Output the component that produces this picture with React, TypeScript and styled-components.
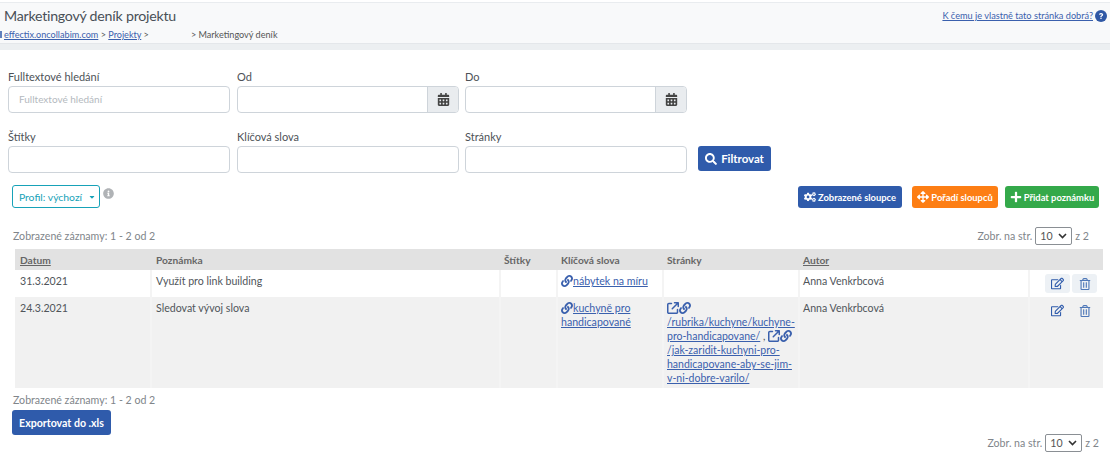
import React from 'react';
import styled, {createGlobalStyle} from 'styled-components';
import {FaCalendarAlt, FaCogs, FaArrowsAlt, FaPlus, FaSearch, FaLink, FaRegEdit, FaRegTrashAlt, FaInfoCircle, FaQuestion, FaCaretDown} from 'react-icons/fa';
import {FaArrowUpRightFromSquare} from 'react-icons/fa6';

const Global = createGlobalStyle`
	html,body{
		margin:0;
		padding:0;
		background:white;
	}
	body{
		font-family:Lato,"Noto Sans",sans-serif;
		font-size:11px;
		color:#4a4f55;
		overflow:hidden;
	}
	*{box-sizing:border-box;}
`;

const Page = styled.div`
	width:1110px;
	height:462px;
	padding-top:2px;
`;

const Header = styled.header`
	height:42px;
	background:#f8f9fa;
	border-top:1px solid #e9ecef;
	border-bottom:1px solid #e4e7ea;
	display:flex;
	justify-content:space-between;
	padding:3px 3px 0 4px;
`;

const Stripe = styled.div`
	height:6px;
	background:#eceff1;
`;

const Title = styled.h1`
	margin:0;
	font-size:14.2px;
	letter-spacing:-0.25px;
	line-height:20px;
	font-weight:400;
	color:#495057;
`;

const Crumbs = styled.div`
	font-size:9.1px;
	line-height:14px;
	margin-top:2px;
	color:#555;
	white-space:nowrap;
	a{
		color:#3a60ad;
		text-decoration:underline;
	}
`;

const CrumbSliver = styled.span`
	display:inline-block;
	width:2px;
	height:7px;
	margin:0 2px 0 -4px;
	background:#5f7fbd;
`;

const CrumbGap = styled.span`
	display:inline-block;
	width:42px;
`;

const HelpLink = styled.div`
	display:flex;
	align-items:flex-start;
	gap:2px;
	font-size:9.2px;
	line-height:12px;
	padding-top:4px;
	color:#3a60ad;
	text-decoration:underline;
`;

const HelpDot = styled.span`
	width:12px;
	height:12px;
	border-radius:50%;
	background:#2f58a5;
	color:white;
	font-size:6px;
	display:flex;
	align-items:center;
	justify-content:center;
`;

const Filters = styled.section`
	display:grid;
	grid-template-columns:229px 228px 233px auto;
	padding:20px 0 0 8px;
`;

const Field = styled.label`
	display:block;
	width:222px;
	height:60px;
	color:#4d5257;
	font-size:11px;
	line-height:14px;
`;

const FieldTitle = styled.div`
	height:16px;
`;

const InputBox = styled.div`
	height:27px;
	border:1px solid #ced4da;
	border-radius:4px;
	background:white;
	display:flex;
	overflow:hidden;
`;

const Placeholder = styled.span`
	flex:1;
	padding-left:10px;
	line-height:25px;
	font-size:10px;
	color:#b4b9be;
`;

const CalendarAddon = styled.span`
	width:31px;
	background:#e9ecef;
	border-left:1px solid #ced4da;
	display:flex;
	align-items:center;
	justify-content:center;
	color:#444;
	font-size:13px;
`;

const Button = styled.button<{$color:string;$width?:number;$left?:number}>`
	display:inline-flex;
	align-items:center;
	justify-content:center;
	gap:2px;
	width:${p=>p.$width?p.$width+'px':'auto'};
	margin-left:${p=>p.$left||0}px;
	height:22px;
	border:none;
	border-radius:3px;
	padding:0;
	font-family:inherit;
	font-size:9.4px;
	font-weight:700;
	color:white;
	background:${p=>p.$color};
	white-space:nowrap;
	svg{
		font-size:12px;
	}
`;

const FilterButton = styled(Button)`
	width:73px;
	height:25px;
	gap:4px;
	margin-top:16px;
	font-size:11.4px;
	svg{
		font-size:12px;
	}
`;

const Toolbar = styled.div`
	display:flex;
	align-items:flex-start;
	padding:0 11px 0 12px;
	margin-top:-5px;
	height:40px;
`;

const Profile = styled.div`
	width:88px;
	height:23px;
	border:1px solid #17a2b8;
	border-radius:3px;
	padding-left:3px;
	color:#17a2b8;
	font-size:10.4px;
	display:flex;
	align-items:center;
	justify-content:center;
	gap:6px;
	svg{
		font-size:8px;
	}
`;

const InfoIcon = styled.span`
	color:#b0b3b6;
	font-size:11px;
	margin:3px 0 0 3px;
	line-height:10px;
`;

const ToolbarRight = styled.div`
	margin-left:auto;
	display:flex;
	padding-top:1px;
`;

const PagerRow = styled.div`
	display:flex;
	justify-content:space-between;
	align-items:center;
	height:24px;
	padding:0 21px 2px 13px;
	color:#80858a;
	font-size:10.6px;
`;

const Pager = styled.div`
	display:flex;
	align-items:center;
	gap:3px;
	color:#80858a;
`;

const FakeSelect = styled.div`
	width:37px;
	height:18px;
	border:1px solid #8a8f94;
	border-radius:2px;
	padding:0 4px;
	display:flex;
	align-items:center;
	justify-content:space-between;
	color:#555;
	font-size:10.6px;
`;

const Table = styled.table`
	width:1088px;
	margin-left:15px;
	border-collapse:collapse;
	table-layout:fixed;
	font-size:10.6px;
	line-height:14px;
	color:#50555a;
	th{
		background:#e2e2e2;
		height:21px;
		padding:0 4px;
		text-align:left;
		font-weight:700;
		font-size:10.2px;
		color:#666;
	}
	th:first-child,th:nth-child(2){
		padding-left:5px;
	}
	td{
		vertical-align:top;
		padding:4px 2px 0 3px;
		border-left:2px solid #f4f4f4;
	}
	td:first-child{
		border-left:none;
		padding-left:5px;
	}
	td:nth-child(2){
		padding-left:4px;
	}
`;

const Col = styled.col<{$width:number}>`
	width:${p=>p.$width}px;
`;

const SortHeader = styled.span`
	text-decoration:underline;
`;

const Row = styled.tr<{$shaded?:boolean;$height:number}>`
	height:${p=>p.$height}px;
	background:${p=>p.$shaded?'#f1f1f1':'white'};
`;

const TableLink = styled.a`
	color:#3a60ad;
	text-decoration:underline;
	svg{
		font-size:12px;
		vertical-align:-2px;
	}
`;

const PageLink = styled(TableLink)`
	font-size:10.5px;
`;

const IconLink = styled(TableLink)`
	text-decoration:none;
	white-space:nowrap;
`;

const Actions = styled.div`
	display:flex;
	justify-content:flex-end;
	gap:2px;
	padding-right:4px;
`;

const ActionButton = styled.span<{$active?:boolean}>`
	width:25px;
	height:19px;
	border-radius:3px;
	background:${p=>p.$active?'#edf1f5':'transparent'};
	display:flex;
	align-items:center;
	justify-content:center;
	font-size:12px;
`;

const EditIcon = styled(FaRegEdit)`
	color:#2f5bab;
	font-size:13px;
`;

const TrashIcon = styled(FaRegTrashAlt)`
	color:#4f78b8;
`;

const ExportButton = styled(Button)`
	width:99px;
	height:25px;
	margin-left:12px;
	font-size:10.6px;
`;

const BottomPager = styled(Pager)`
	justify-content:flex-end;
	padding-right:11px;
	margin-top:-1px;
	height:18px;
	font-size:10.6px;
`;

const Count = styled.div`
	padding-left:13px;
	height:22px;
	line-height:25px;
	color:#80858a;
	font-size:10.6px;
`;

function PagerControl() {
	return (
		<>
			Zobr. na str.
			<FakeSelect>10 <svg width="9" height="6" viewBox="0 0 9 6"><path d="M1 1l3.5 3.5L8 1" fill="none" stroke="#333" strokeWidth="1.6"/></svg></FakeSelect>
			z 2
		</>
	);
}

function RowActions({active}:{active?:boolean}) {
	return (
		<Actions>
			<ActionButton $active={active}><EditIcon/></ActionButton>
			<ActionButton $active={active}><TrashIcon/></ActionButton>
		</Actions>
	);
}

const pageLinks = (
	<>
		<IconLink><FaArrowUpRightFromSquare/><FaLink/></IconLink>
		<br/>
		<PageLink>/rubrika/kuchyne/kuchyne-pro-handicapovane/</PageLink>
		{' , '}
		<IconLink><FaArrowUpRightFromSquare/><FaLink/></IconLink>
		{' '}
		<PageLink>/jak-zaridit-kuchyni-pro-handicapovane-aby-se-jim-v-ni-dobre-varilo/</PageLink>
	</>
);

function App() {
	return (
		<Page>
			<Global/>
			<Header>
				<div>
					<Title>Marketingový deník projektu</Title>
					<Crumbs>
						<CrumbSliver/><a>effectix.oncollabim.com</a> &gt; <a>Projekty</a> &gt;<CrumbGap/>&gt; Marketingový deník
					</Crumbs>
				</div>
				<HelpLink>
					K čemu je vlastně tato stránka dobrá?
					<HelpDot><FaQuestion/></HelpDot>
				</HelpLink>
			</Header>
			<Stripe/>
			<Filters>
				<Field>
					<FieldTitle>Fulltextové hledání</FieldTitle>
					<InputBox><Placeholder>Fulltextové hledání</Placeholder></InputBox>
				</Field>
				<Field>
					<FieldTitle>Od</FieldTitle>
					<InputBox><Placeholder/><CalendarAddon><FaCalendarAlt/></CalendarAddon></InputBox>
				</Field>
				<Field>
					<FieldTitle>Do</FieldTitle>
					<InputBox><Placeholder/><CalendarAddon><FaCalendarAlt/></CalendarAddon></InputBox>
				</Field>
				<div/>
				<Field>
					<FieldTitle>Štítky</FieldTitle>
					<InputBox/>
				</Field>
				<Field>
					<FieldTitle>Klíčová slova</FieldTitle>
					<InputBox/>
				</Field>
				<Field>
					<FieldTitle>Stránky</FieldTitle>
					<InputBox/>
				</Field>
				<div>
					<FilterButton $color="#2f5bab"><FaSearch/> Filtrovat</FilterButton>
				</div>
			</Filters>
			<Toolbar>
				<Profile>Profil: výchozí <FaCaretDown/></Profile>
				<InfoIcon><FaInfoCircle/></InfoIcon>
				<ToolbarRight>
					<Button $color="#2f5bab" $width={104}><FaCogs/> Zobrazené sloupce</Button>
					<Button $color="#fd7e14" $width={86} $left={10}><FaArrowsAlt/> Pořadí sloupců</Button>
					<Button $color="#34a94a" $width={94} $left={7}><FaPlus/> Přidat poznámku</Button>
				</ToolbarRight>
			</Toolbar>
			<PagerRow>
				<span>Zobrazené záznamy: 1 - 2 od 2</span>
				<Pager><PagerControl/></Pager>
			</PagerRow>
			<Table>
				<colgroup>
					<Col $width={136}/>
					<Col $width={349}/>
					<Col $width={57}/>
					<Col $width={106}/>
					<Col $width={136}/>
					<Col $width={230}/>
					<Col $width={74}/>
				</colgroup>
				<thead>
					<tr>
						<th><SortHeader>Datum</SortHeader></th>
						<th>Poznámka</th>
						<th>Štítky</th>
						<th>Klíčová slova</th>
						<th>Stránky</th>
						<th><SortHeader>Autor</SortHeader></th>
						<th/>
					</tr>
				</thead>
				<tbody>
					<Row $height={27}>
						<td>31.3.2021</td>
						<td>Využít pro link building</td>
						<td/>
						<td><TableLink><FaLink/>nábytek na míru</TableLink></td>
						<td/>
						<td>Anna Venkrbcová</td>
						<td><RowActions active/></td>
					</Row>
					<Row $shaded $height={91}>
						<td>24.3.2021</td>
						<td>Sledovat vývoj slova</td>
						<td/>
						<td><TableLink><FaLink/>kuchyně pro handicapované</TableLink></td>
						<td>{pageLinks}</td>
						<td>Anna Venkrbcová</td>
						<td><RowActions/></td>
					</Row>
				</tbody>
			</Table>
			<Count>Zobrazené záznamy: 1 - 2 od 2</Count>
			<ExportButton $color="#2f5bab">Exportovat do .xls</ExportButton>
			<BottomPager><PagerControl/></BottomPager>
		</Page>
	);
}

export default App;
